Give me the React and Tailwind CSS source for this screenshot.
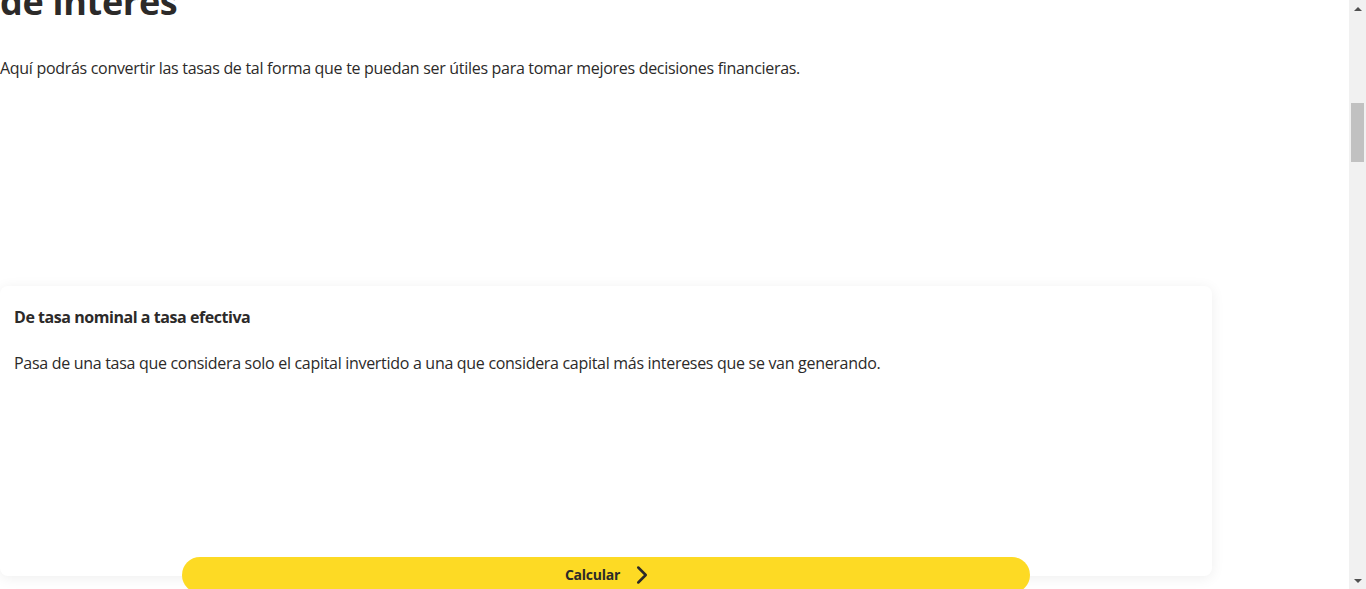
import React from "react";

function Chevron() {
  return (
    <svg width="30" height="30" viewBox="0 0 24 24" fill="none" stroke="#2c2a29" strokeWidth="2" strokeLinecap="round" strokeLinejoin="round">
      <path d="m9 18 6-6-6-6" />
    </svg>
  );
}

function Scrollbar() {
  return (
    <div className="flex h-[589px] w-[17px] shrink-0 flex-col items-center bg-[#f1f1f1]">
      <div className="flex h-[17px] w-full items-center justify-center">
        <div className="h-0 w-0 border-x-[4px] border-b-[4px] border-x-transparent border-b-[#505050]" />
      </div>
      <div className="mt-[86px] h-[59px] w-[13px] bg-[#c1c1c1]" />
      <div className="flex-1" />
      <div className="flex h-[17px] w-full items-center justify-center">
        <div className="h-0 w-0 border-x-[4px] border-t-[4px] border-x-transparent border-t-[#505050]" />
      </div>
    </div>
  );
}

export default function App() {
  return (
    <div className="flex h-[589px] w-[1366px] overflow-hidden bg-white text-[#2c2a29]" style={{ fontFamily: '"Open Sans", "Liberation Sans", sans-serif' }}>
      <main className="w-[1349px] shrink-0">
        <div className="mt-[-72px] w-[1212px]">
          <h1 className="text-[36px] font-bold leading-[49px] tracking-[-0.3px] text-[#2c2a29]">
            Conversor de tasas
            <br />
            de interés
          </h1>
          <p className="mt-[30px] text-base leading-6 tracking-[-0.3px]">
            Aquí podrás convertir las tasas de tal forma que te puedan ser útiles para tomar mejores decisiones financieras.
          </p>
          <div className="mt-[206px] h-[290px] rounded-lg bg-white px-[14px] pt-[19px] shadow-[0_2px_14px_rgba(0,0,0,0.07)]">
            <h2 className="text-base font-bold leading-6 tracking-[-0.45px]">De tasa nominal a tasa efectiva</h2>
            <p className="mt-[22px] text-base leading-6 tracking-[-0.3px]">
              Pasa de una tasa que considera solo el capital invertido a una que considera capital más intereses que se van generando.
            </p>
          </div>
          <div className="relative mx-auto mt-[-19px] w-[848px]">
            <button className="flex h-9 w-full items-center justify-center gap-[7px] rounded-full bg-[#fdda24] pl-[10px] text-sm font-bold leading-5 tracking-[-0.25px] text-[#2c2a29]">
              <span>Calcular</span>
              <Chevron />
            </button>
          </div>
        </div>
      </main>
      <Scrollbar />
    </div>
  );
}
